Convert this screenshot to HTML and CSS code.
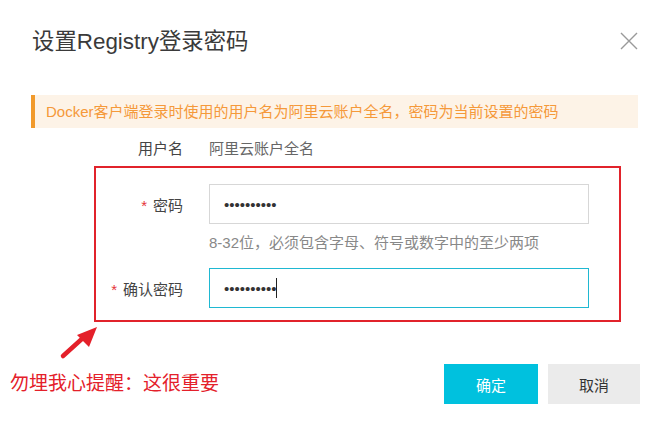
FILE: index.html
```html
<!DOCTYPE html>
<html>
  <head>
    <meta charset="utf-8" />
    <title>设置Registry登录密码</title>
    <link rel="stylesheet" href="styles.css">
  </head>
  <body>
    <div class="dialog">
      <div class="dialog-head">
        <h2>设置Registry登录密码</h2>
        <span class="close">
          <svg width="18" height="18" viewBox="0 0 18 18">
            <path d="M1 1 L17 17 M17 1 L1 17" stroke="#9a9a9a" stroke-width="1.4" fill="none" />
          </svg>
        </span>
      </div>

      <div class="notice">Docker客户端登录时使用的用户名为阿里云账户全名，密码为当前设置的密码</div>

      <div class="form-row user-row">
        <label>用户名</label>
        <span class="value">阿里云账户全名</span>
      </div>

      <div class="mark-box">
        <div class="form-row">
          <label for="pwd"><i>*</i>密码</label>
          <input type="password" id="pwd" value="1234567890" />
        </div>
        <div class="form-row hint-row">
          <span></span>
          <span class="hint">8-32位，必须包含字母、符号或数字中的至少两项</span>
        </div>
        <div class="form-row">
          <label for="pwd2"><i>*</i>确认密码</label>
          <div class="field">
            <input type="password" id="pwd2" class="active" value="1234567890" />
            <span class="caret"></span>
          </div>
        </div>
      </div>

      <div class="dialog-foot">
        <span class="note">勿埋我心提醒：这很重要</span>
        <div class="actions">
          <button class="btn primary">确定</button>
          <button class="btn">取消</button>
        </div>
      </div>

      <svg class="arrow" width="664" height="430" viewBox="0 0 664 430">
        <path d="M63 356 L84 337" stroke="#e4202a" stroke-width="4.5" stroke-linecap="round" fill="none" />
        <polygon points="97,327 77,335 89,347" fill="#e4202a" />
      </svg>
    </div>
  </body>
</html>
```

FILE: styles.css
```css
body {
  margin: 0;
  font-family: "Liberation Sans", "Noto Sans CJK SC", sans-serif;
  color: #333;
  background: #fff;
}
.dialog {
  position: relative;
  width: 664px;
  height: 430px;
}
.dialog-head {
  display: flex;
  justify-content: space-between;
  align-items: center;
  padding: 27px 26px 0 32px;
  margin-bottom: 38px;
}
.dialog-head h2 {
  margin: 0;
  font-size: 22.4px;
  font-weight: normal;
  line-height: 30px;
  color: #3a3a3a;
}
.close {
  display: block;
  width: 18px;
  height: 18px;
  margin-top: -2px;
}
.close svg {
  display: block;
}

.notice {
  margin: 0 26px 0 31px;
  height: 33px;
  line-height: 33px;
  padding-left: 11px;
  border-left: 4px solid #f19a2c;
  background: #fdf3e7;
  color: #f5993a;
  font-size: 15px;
}

.form-row {
  display: grid;
  grid-template-columns: 87px 380px;
  column-gap: 26px;
  align-items: center;
  font-size: 15px;
}
.form-row label {
  text-align: right;
  color: #444;
}
.form-row label i {
  font-style: normal;
  color: #e5343a;
  margin-right: 6px;
}
.user-row {
  padding-left: 96px;
  margin-top: 11px;
  line-height: 20px;
}
.user-row .value {
  color: #666;
}

.mark-box {
  margin: 7px 0 0 94px;
  width: 527px;
  height: 156px;
  box-sizing: border-box;
  border: 2px solid #e1232b;
  padding-top: 16px;
}
.form-row input {
  width: 380px;
  height: 40px;
  box-sizing: border-box;
  border: 1px solid #d7d7d7;
  padding: 0 14px;
  font-family: "Liberation Sans", sans-serif;
  font-size: 15px;
  color: #333;
  outline: none;
}
.form-row input.active {
  border-color: #1fb8d2;
}
.field {
  position: relative;
}
.caret {
  position: absolute;
  left: 67px;
  top: 10px;
  width: 1px;
  height: 20px;
  background: #222;
}
.hint-row {
  margin: 9px 0 15px;
  line-height: 20px;
}
.hint {
  color: #888;
}

.dialog-foot {
  display: flex;
  justify-content: space-between;
  align-items: center;
  margin-top: 42px;
  padding: 0 24px 0 10px;
}
.note {
  color: #e4202a;
  font-size: 19px;
  line-height: 24px;
}
.actions {
  display: flex;
  gap: 10px;
}
.btn {
  width: 92px;
  height: 40px;
  border: none;
  background: #ebebeb;
  color: #333;
  font-family: "Liberation Sans", "Noto Sans CJK SC", sans-serif;
  font-size: 15px;
  padding: 0;
}
.btn.primary {
  width: 94px;
  background: #00c1de;
  color: #fff;
}

.arrow {
  position: absolute;
  left: 0;
  top: 0;
  pointer-events: none;
}
```
